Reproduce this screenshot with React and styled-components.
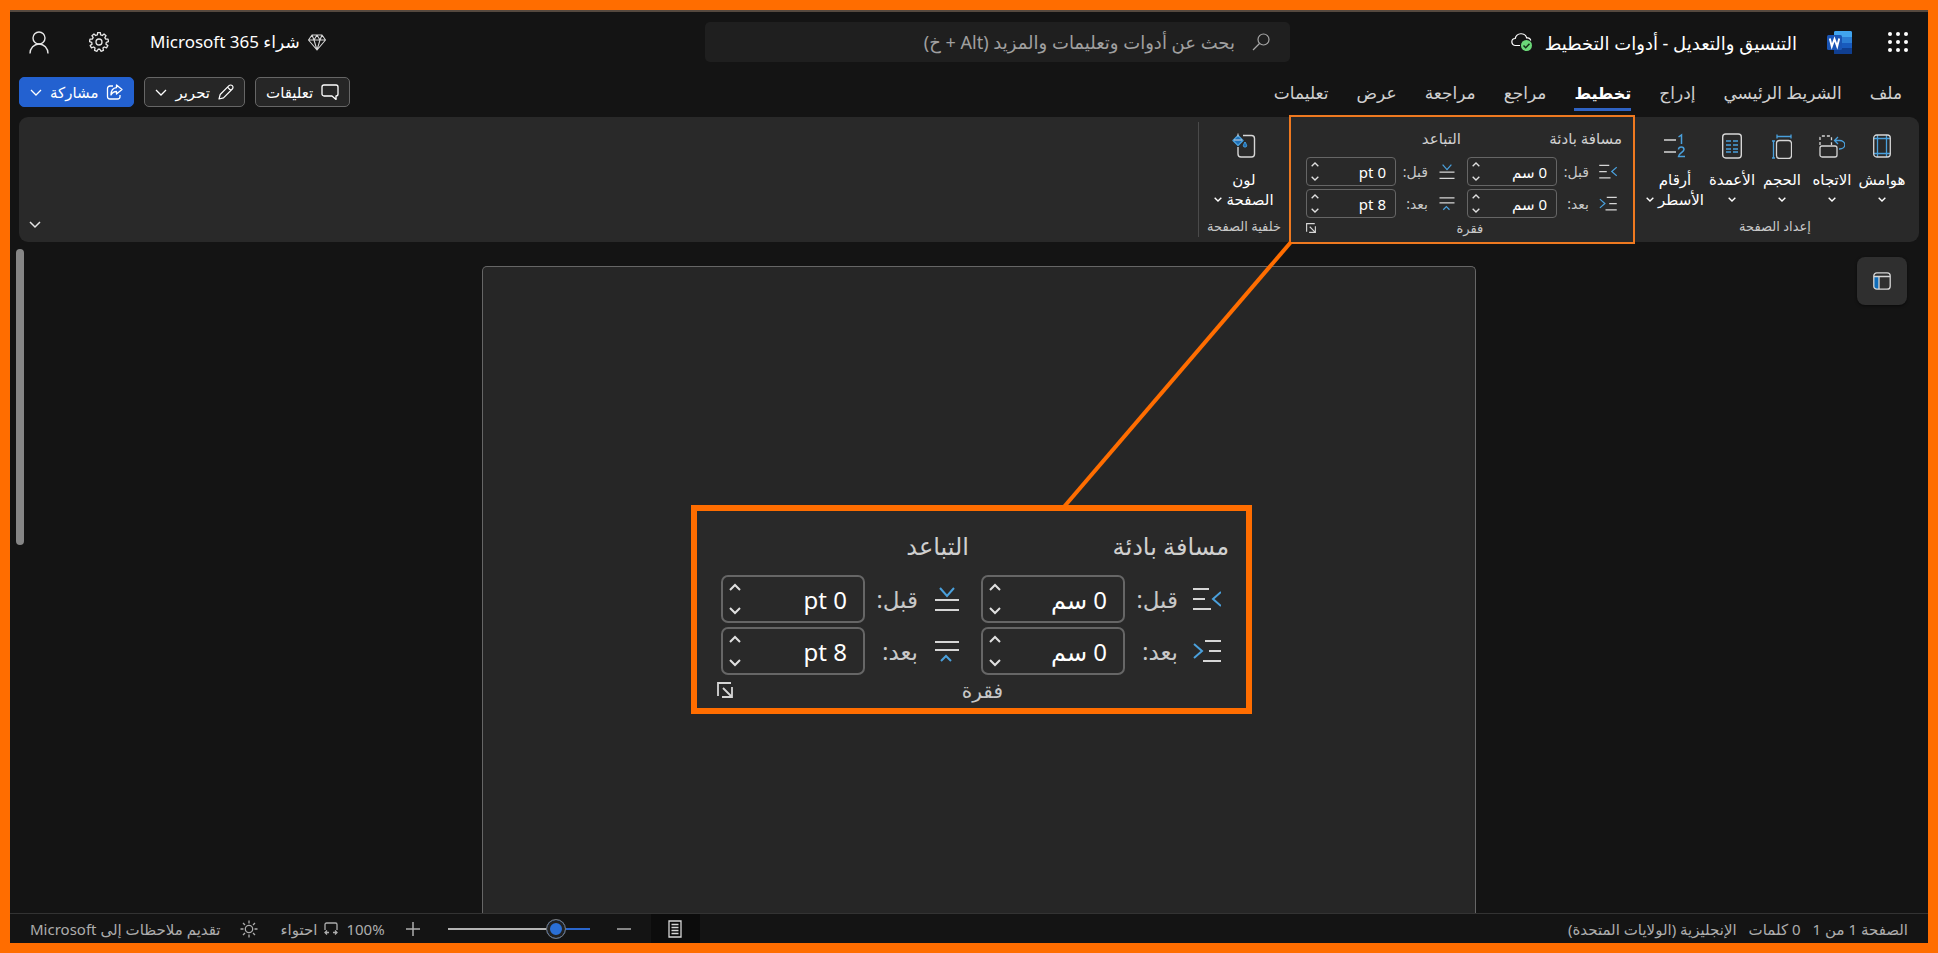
import React from "react";
import styled, { createGlobalStyle, css } from "styled-components";

const blue = "#4aa0dc";
const line = "#d6d6d6";
const orange = "#ff6d00";

const Global = createGlobalStyle`
  *, *::before, *::after { box-sizing: border-box; }
  body { margin: 0; background: #141414; }
  body, button, input { font-family: "Noto Sans", "DejaVu Sans", sans-serif; }
  button { cursor: pointer; }
`;

/* ---------- shell ---------- */

const Frame = styled.div`
  display: flex;
  flex-direction: column;
  min-height: 100vh;
  border: 10px solid ${orange};
  background: #141414;
  color: #fff;
  overflow: hidden;
`;

const Header = styled.header`
  display: grid;
  grid-template-columns: 638fr 585fr 695fr;
  align-items: center;
  height: 62px;
  border-top: 2px solid #55493f;
`;

const HeaderStart = styled.div`
  display: flex;
  align-items: center;
  padding-inline-start: 20px;
`;

const HeaderEnd = styled.div`
  display: flex;
  align-items: center;
  justify-content: flex-end;
  padding-inline-end: 19px;
`;

const IconButton = styled.button`
  display: flex;
  padding: 0;
  border: 0;
  background: none;
  color: #e6e6e6;
  margin-inline-start: ${(p) => p.$gap || 0}px;
`;

const LogoLink = styled.a`
  display: flex;
  margin-inline-start: 36px;
`;

const DocTitle = styled.h1`
  margin: 0;
  margin-inline: 30px 12px;
  padding-top: 2px;
  font-size: 18px;
  line-height: 24px;
  font-weight: 400;
  white-space: nowrap;
`;

const BuyButton = styled.button`
  display: flex;
  align-items: center;
  gap: 8px;
  padding: 0;
  border: 0;
  background: none;
  color: #fff;
  font-size: 17px;
  line-height: 24px;
  white-space: nowrap;
`;

const Search = styled.label`
  display: flex;
  align-items: center;
  gap: 17px;
  height: 40px;
  padding-inline: 20px;
  border-radius: 5px;
  background: #1f1f1f;
  color: #a6a6a6;
`;

const SearchInput = styled.input`
  flex: 1;
  min-width: 0;
  padding: 0;
  border: 0;
  outline: 0;
  background: none;
  color: #fff;
  font-size: 18px;
  &::placeholder { color: #a0a0a0; opacity: 1; }
`;

/* ---------- tabs ---------- */

const TabBar = styled.div`
  display: flex;
  justify-content: space-between;
  height: 45px;
  padding-inline: 26px 9px;
`;

const Tabs = styled.nav`
  display: flex;
  align-items: center;
  gap: 28px;
`;

const Tab = styled.button`
  height: 32px;
  padding: 0;
  border: 0;
  border-bottom: 3px solid transparent;
  background: none;
  color: #d0d0d0;
  font-size: 17px;
  line-height: 24px;
  white-space: nowrap;
  ${(p) => p.$active && css`
    border-color: #2f63c4;
    color: #fff;
    font-size: 16px;
    font-weight: 700;
  `}
`;

const Actions = styled.div`
  display: flex;
  gap: 10px;
  padding-top: 5px;
`;

const Action = styled.button`
  display: flex;
  align-items: center;
  justify-content: center;
  gap: 8px;
  height: 30px;
  padding: 0 10px;
  border: 1px solid ${(p) => (p.$primary ? "#2361d0" : "#666")};
  border-radius: 5px;
  background: ${(p) => (p.$primary ? "#2361d0" : "#262626")};
  color: #fff;
  font-size: 15px;
  line-height: 20px;
  white-space: nowrap;
`;

/* ---------- ribbon ---------- */

const Ribbon = styled.section`
  display: flex;
  height: 125px;
  margin-inline: 9px;
  border-radius: 9px;
  background: #292929;
`;

const Group = styled.div`
  display: flex;
  flex-direction: column;
  padding-inline: ${(p) => p.$pad || "0"};
`;

const Tools = styled.div`
  display: flex;
  justify-content: center;
  flex: 1;
  padding-top: 14px;
`;

const Tool = styled.button`
  display: flex;
  flex-direction: column;
  align-items: center;
  width: ${(p) => p.$width || 50}px;
  padding: 0;
  border: 0;
  background: none;
  color: #fff;
  font-size: 15px;
  line-height: 20px;
  white-space: nowrap;
`;

const ToolIcon = styled.span`
  display: flex;
  align-items: center;
  height: 30px;
  margin-bottom: 8px;
`;

const ToolLine = styled.span`
  display: flex;
  align-items: center;
  justify-content: center;
  gap: 4px;
  height: 20px;
`;

const GroupName = styled.div`
  height: 25px;
  color: #c8c8c8;
  font-size: 13px;
  line-height: 18px;
  text-align: center;
  white-space: nowrap;
`;

const RibbonRest = styled.div`
  display: flex;
  flex: 1;
  align-items: flex-end;
  justify-content: flex-end;
  margin-block: 5px;
  padding: 0 10px 7px;
  border-inline-start: 1px solid #4a4a4a;
`;

/* ---------- paragraph settings (ribbon size and enlarged size) ---------- */

const small = {
  pad: "11px 11px 0 15px", gap: 6, head: 20, headGap: 6, font: 15, row: 29, rowGap: 3,
  icon: 18, inset: 5, iconGap: 10, label: 32, labelFont: 14, field: 90, radius: 4, textPad: 10,
  foot: 20, border: 1, footFont: 13, launch: 10, spin: 16,
};
const large = {
  pad: "19px 17px 0 20px", gap: 8, head: 32, headGap: 9, font: 24, row: 48, rowGap: 4,
  icon: 28, inset: 8, iconGap: 15, label: 53, labelFont: 23, field: 144, radius: 7, textPad: 18,
  foot: 30, border: 2, footFont: 20, launch: 16, spin: 24,
};

const Settings = styled.section`
  display: flex;
  flex-direction: column;
  flex: 1;
  padding: ${(p) => p.$s.pad};
  font-size: ${(p) => p.$s.font}px;
`;

const Columns = styled.div`
  display: flex;
  gap: ${(p) => p.$s.gap}px;
`;

const Column = styled.div`
  flex: 1;
  display: flex;
  flex-direction: column;
  gap: ${(p) => p.$s.rowGap}px;
`;

const ColumnTitle = styled.div`
  height: ${(p) => p.$s.head}px;
  margin-bottom: ${(p) => p.$s.headGap}px;
  line-height: ${(p) => p.$s.head}px;
  color: #d0d0d0;
  white-space: nowrap;
`;

const Row = styled.div`
  display: flex;
  align-items: center;
  height: ${(p) => p.$s.row}px;
  padding-inline-start: ${(p) => p.$s.inset}px;
`;

const RowLabel = styled.label`
  width: ${(p) => p.$s.label}px;
  margin-inline-start: ${(p) => p.$s.iconGap}px;
  color: #c8c8c8;
  font-size: ${(p) => p.$s.labelFont}px;
  white-space: nowrap;
`;

const Field = styled.div`
  display: flex;
  width: ${(p) => p.$s.field}px;
  height: 100%;
  border: ${(p) => p.$s.border}px solid #666;
  border-radius: ${(p) => p.$s.radius}px;
`;

const Value = styled.input`
  flex: 1;
  min-width: 0;
  padding: 0;
  padding-inline-start: ${(p) => p.$s.textPad - p.$s.border}px;
  border: 0;
  outline: 0;
  background: none;
  color: #fff;
  font-size: ${(p) => p.$s.font}px;
`;

const Spinner = styled.div`
  display: flex;
  flex-direction: column;
  width: ${(p) => p.$s.spin}px;
`;

const Spin = styled.button`
  display: flex;
  flex: 1;
  align-items: center;
  justify-content: center;
  padding: 0;
  border: 0;
  background: none;
  color: #e0e0e0;
`;

const Footer = styled.div`
  display: grid;
  grid-template-columns: 12fr auto 13fr;
  align-items: center;
  height: ${(p) => p.$s.foot}px;
  color: #c8c8c8;
  font-size: ${(p) => p.$s.footFont}px;
`;

const Launcher = styled.button`
  display: flex;
  justify-self: end;
  padding: 0;
  border: 0;
  background: none;
`;

const Highlight = styled.div`
  display: flex;
  width: 346px;
  margin-block: -2px;
  border: 2px solid #ee7920;
  background: #292929;
`;

/* ---------- document area ---------- */

const Workspace = styled.main`
  position: relative;
  display: flex;
  flex: 1;
  justify-content: center;
  padding: 24px 0 0 20px;
`;

const Sheet = styled.div`
  position: relative;
  width: 994px;
  max-width: 100%;
  border: 1px solid #666;
  border-bottom: 0;
  border-radius: 5px 5px 0 0;
  background: #262626;
`;

const Callout = styled.div`
  position: absolute;
  top: 238px;
  left: 208px;
  display: flex;
  width: 561px;
  height: 209px;
  border: 6px solid ${orange};
  background: #292929;
`;

const Connector = styled.svg`
  position: absolute;
  left: 364px;
  bottom: 200px;
`;

const ScrollThumb = styled.div`
  position: absolute;
  top: 7px;
  left: 6px;
  width: 8px;
  height: 296px;
  border-radius: 4px;
  background: #868686;
`;

const PaneButton = styled.button`
  position: absolute;
  top: 15px;
  right: 21px;
  display: flex;
  align-items: center;
  justify-content: center;
  width: 50px;
  height: 48px;
  padding: 0;
  border: 0;
  border-radius: 8px;
  background: #2f2f2f;
  box-shadow: 0 1px 3px #0008;
`;

/* ---------- status bar ---------- */

const StatusBar = styled.footer`
  display: flex;
  align-items: center;
  justify-content: space-between;
  height: 30px;
  padding-inline: 20px;
  border-top: 1px solid #333;
  color: #adadad;
  font-size: 15px;
  line-height: 20px;
  white-space: nowrap;
`;

const StatusGroup = styled.div`
  display: flex;
  align-items: center;
  gap: ${(p) => p.$gap || 0}px;
  height: 100%;
`;

const StatusButton = styled.button`
  display: flex;
  align-items: center;
  gap: 7px;
  padding: 0;
  border: 0;
  background: none;
  color: inherit;
  font-size: 15px;
  line-height: 20px;
  margin-inline-start: ${(p) => p.$gap || 0}px;
`;

const ViewButton = styled.button`
  display: flex;
  align-items: center;
  justify-content: center;
  width: 49px;
  height: 100%;
  padding: 0;
  border: 0;
  background: #0c0c0c;
`;

const ZoomSlider = styled.input`
  appearance: none;
  width: 142px;
  height: 20px;
  margin: 0;
  margin-inline-start: 27px;
  background: linear-gradient(to left, #2a66cc 23%, #b4b4b4 23%) center / 100% 2px no-repeat;
  &::-webkit-slider-thumb {
    appearance: none;
    width: 20px;
    height: 20px;
    border: 1px solid #777;
    border-radius: 50%;
    background: #2a6fd6;
    box-shadow: inset 0 0 0 3px #222;
  }
`;

/* ---------- drawings ---------- */

const Svg = ({ w, h = w, vb, children, ...rest }) => (
  <svg width={w} height={h} viewBox={vb || `0 0 ${w} ${h}`} fill="none" stroke="currentColor" aria-hidden="true" {...rest}>
    {children}
  </svg>
);

const Chevron = ({ w = 12, up, sw = 1.5 }) => (
  <Svg w={w} h={w} vb="0 0 12 12" strokeWidth={sw}>
    <path d={up ? "M1 8l5-5 5 5" : "M1 4l5 5 5-5"} />
  </Svg>
);

const Waffle = () => (
  <Svg w={20} fill="#fff" stroke="none">
    {[2, 10, 18].map((y) => [2, 10, 18].map((x) => <circle key={x + "-" + y} cx={x} cy={y} r="2" />))}
  </Svg>
);

const WordLogo = () => (
  <svg width="25" height="23" viewBox="0 0 25 23" aria-hidden="true">
    <rect x="7" width="18" height="23" rx="1.5" fill="#185abd" />
    <path d="M8.5 0h15A1.5 1.5 0 0 1 25 1.5V6H7V1.5A1.5 1.5 0 0 1 8.5 0z" fill="#41a5ee" />
    <path d="M7 6h18v6H7z" fill="#2b7cd3" />
    <path d="M7 17h18v4.5a1.5 1.5 0 0 1-1.5 1.5h-15A1.5 1.5 0 0 1 7 21.500z" fill="#103f91" />
    <rect y="4" width="15" height="15" rx="1.5" fill="#1a55b5" />
    <path d="M2.800 7.500l2 8 2.700-7.500 2.700 7.500 2-8" fill="none" stroke="#fff" strokeWidth="1.900" />
  </svg>
);

const CloudSaved = () => (
  <Svg w={22} h={20} strokeWidth="1.200">
    <path d="M9 13.500H4.500a3.500 3.500 0 0 1-.3-7A6 6 0 0 1 15.800 6a3.600 3.600 0 0 1 4 2.500" />
    <circle cx="15.500" cy="13.500" r="5.500" fill="#6bd878" stroke="none" />
    <path d="M12.500 13.500l2.200 2.200 3.800-4" stroke="#153018" strokeWidth="1.500" />
  </Svg>
);

const SearchIcon = () => (
  <Svg w={18} strokeWidth="1.200">
    <circle cx="11.500" cy="6.500" r="5.500" />
    <path d="M7.500 10.500L1 17" />
  </Svg>
);

const Diamond = () => (
  <Svg w={18} h={17} strokeWidth="1.100" stroke={line} strokeLinejoin="round">
    <path d="M4 1h10l3.500 5L9 16 .5 6zM.5 6h17M4 1l2 5 3 10 3-10 2-5M6 6l3-5 3 5" />
  </Svg>
);

const gearPath = (() => {
  const pts = [];
  for (let i = 0; i < 9; i += 1) {
    [[-13, 7.3], [-8, 9.5], [8, 9.5], [13, 7.3]].forEach(([da, r]) => {
      const a = ((i * 40 + da - 90) * Math.PI) / 180;
      pts.push(`${(10 + r * Math.cos(a)).toFixed(2)} ${(10 + r * Math.sin(a)).toFixed(2)}`);
    });
  }
  return `M${pts.join("L")}z`;
})();

const Gear = () => (
  <Svg w={20} strokeWidth="1.300" strokeLinejoin="round">
    <path d={gearPath} />
    <circle cx="10" cy="10" r="3" />
  </Svg>
);

const Person = () => (
  <Svg w={20} h={23} strokeWidth="1.400">
    <circle cx="10" cy="7" r="6" />
    <path d="M1 22.500a9 9.500 0 0 1 18 0" />
  </Svg>
);

const Comment = () => (
  <Svg w={18} h={16} strokeWidth="1.300" strokeLinejoin="round">
    <path d="M3 1h12a2 2 0 0 1 2 2v7a2 2 0 0 1-2 2v3.500L11 12H3a2 2 0 0 1-2-2V3a2 2 0 0 1 2-2z" />
  </Svg>
);

const Pencil = () => (
  <Svg w={16} strokeWidth="1.200" strokeLinejoin="round">
    <path d="M1 15l1.200-4.500L11 1.700a2.300 2.300 0 0 1 3.300 3.300L5.500 13.800zM9.500 3.200l3.300 3.300" />
  </Svg>
);

const Share = () => (
  <Svg w={17} h={16} strokeWidth="1.300" strokeLinejoin="round">
    <path d="M7 2H4a2.500 2.500 0 0 0-2.500 2.500v8A2.500 2.500 0 0 0 4 15h7.500a2.500 2.500 0 0 0 2.500-2.500V11" />
    <path d="M10.500 1l5.500 4.500-5.500 4.500V7.500C7.500 7.500 6 9 5 11c0-4 2-7 5.500-7.300z" />
  </Svg>
);

const Margins = () => (
  <Svg w={18} h={24} strokeWidth="1.300">
    <path d="M4.500 1v22M13.500 1v22M1 4.500h16M1 19.500h16" stroke={blue} />
    <rect x=".7" y="1" width="16.600" height="22" rx="3" stroke={line} />
  </Svg>
);

const Orientation = () => (
  <Svg w={26} h={24} strokeWidth="1.300">
    <path d="M1 11V3.500A1.500 1.500 0 0 1 2.500 2H11a1.500 1.500 0 0 1 1.500 1.500V11" stroke={line} strokeDasharray="3 2" />
    <rect x="1" y="12" width="17" height="11" rx="2" stroke={line} />
    <path d="M19 3l-3.500 3.500L19 10M16 6.500h4.500a5 4 0 0 1 0 8.500H20" stroke={blue} />
  </Svg>
);

const Size = () => (
  <Svg w={20} h={25} strokeWidth="1.300">
    <rect x="4.500" y="6.500" width="15" height="18" rx="3" stroke={line} />
    <path d="M5 2.500h14M5 .5v4M19 .5v4M1.500 7v17M0 7h3M0 24h3" stroke={blue} />
  </Svg>
);

const ColumnsIcon = () => (
  <Svg w={20} h={26} strokeWidth="1.400">
    <rect x=".7" y="1" width="18.600" height="24" rx="3" stroke={line} />
    <path d="M4 8h5M4 12h5M4 16h5M4 19h5M11 8h5M11 12h5M11 16h5M11 19h5" stroke={blue} />
  </Svg>
);

const LineNumbers = () => (
  <Svg w={24} h={26} strokeWidth="1.500">
    <path d="M1 7h12M1 19h12" stroke={line} />
    <path d="M15.500 4l3-2v9M15.500 16.500c0-3.500 5.500-3.300 5.500 0 0 2.500-5.500 4-5.500 7H22" stroke={blue} />
  </Svg>
);

const PageColor = () => (
  <Svg w={24} h={26} strokeWidth="1.400">
    <path d="M11 2.500h8.500a3 3 0 0 1 3 3V21a3 3 0 0 1-3 3H9a3 3 0 0 1-3-3v-7" stroke={line} />
    <path d="M1 7.500L6 2.500l5 5-5 5z" fill="#1d6fb8" stroke={blue} strokeLinejoin="round" />
    <path d="M6 .5v3M2 7h8" stroke={line} strokeWidth="1" />
    <path d="M13 9c2.500 4 2 5 0 5s-2.500-1 0-5z" fill="#1d6fb8" stroke={blue} strokeWidth="1" />
  </Svg>
);

const rowIcons = {
  indentBefore: <><path d="M0 2h16M0 12h12M0 22h18" stroke={line} /><path d="M28 5l-8 7 8 7" stroke={blue} /></>,
  indentAfter: <><path d="M12 2h16M16 12h12M10 22h18" stroke={line} /><path d="M1 5l8 7-8 7" stroke={blue} /></>,
  spaceBefore: <><path d="M2 13h24M2 23h24" stroke={line} /><path d="M7 1l7 8 7-8" stroke={blue} /></>,
  spaceAfter: <><path d="M2 3h24M2 11h24" stroke={line} /><path d="M8 22l5-5 5 5" stroke={blue} /></>,
};

const RowIcon = ({ name, w }) => (
  <Svg w={w} h={Math.round((w * 24) / 28)} vb="0 0 28 24" strokeWidth="2">{rowIcons[name]}</Svg>
);

const LaunchIcon = ({ w }) => (
  <Svg w={w} vb="0 0 16 16" strokeWidth="1.800" stroke={line}>
    <path d="M1 14V1h13M15 5v10H5M6 6l8.500 8.500" />
  </Svg>
);

const Pane = () => (
  <Svg w={18} strokeWidth="1.300" stroke={line}>
    <path d="M1 4.500h5V17H3a2 2 0 0 1-2-2z" fill="#0f6cb8" stroke="none" />
    <rect x=".8" y=".8" width="16.400" height="16.400" rx="3" />
    <path d="M1 4.500h16M6 4.500V17" />
  </Svg>
);

const DocView = () => (
  <Svg w={14} h={18} strokeWidth="1.300" stroke={line}>
    <path d="M1 1h12v16H1zM3.500 4.500h7M3.500 7.500h7M3.500 10.500h7M3.500 13.500h7" />
  </Svg>
);

const FitIcon = () => (
  <Svg w={14} h={13} strokeWidth="1.300">
    <path d="M1 8V2.500A1.500 1.500 0 0 1 2.500 1h9A1.500 1.500 0 0 1 13 2.500V8M1 10.500h4M3 8.500l-2 2 2 2M13 10.500H9M11 8.500l2 2-2 2" />
  </Svg>
);

const Sun = () => (
  <Svg w={18} strokeWidth="1.300">
    <circle cx="9" cy="9" r="3.700" />
    <path d="M9 .5v3M9 14.500v3M.5 9h3M14.500 9h3M3 3l2 2M13 13l2 2M15 3l-2 2M5 13l-2 2" />
  </Svg>
);

/* ---------- composed parts ---------- */

const settings = [
  { title: "مسافة بادئة", rows: [["indentBefore", "قبل:", "0 سم"], ["indentAfter", "بعد:", "0 سم"]] },
  { title: "التباعد", rows: [["spaceBefore", "قبل:", "0 pt"], ["spaceAfter", "بعد:", "8 pt"]] },
];

function ParagraphSettings({ s, id }) {
  const chevron = s === large ? 12 : 8;
  return (
    <Settings $s={s}>
      <Columns $s={s}>
        {settings.map((col) => (
          <Column $s={s} key={col.title}>
            <ColumnTitle $s={s}>{col.title}</ColumnTitle>
            {col.rows.map(([icon, label, value]) => (
              <Row $s={s} key={icon}>
                <RowIcon name={icon} w={s.icon} />
                <RowLabel $s={s} htmlFor={`${id}-${icon}`}>{label}</RowLabel>
                <Field $s={s}>
                  <Value $s={s} id={`${id}-${icon}`} defaultValue={value} />
                  <Spinner $s={s}>
                    <Spin aria-label="زيادة"><Chevron w={chevron} up sw={2} /></Spin>
                    <Spin aria-label="إنقاص"><Chevron w={chevron} sw={2} /></Spin>
                  </Spinner>
                </Field>
              </Row>
            ))}
          </Column>
        ))}
      </Columns>
      <Footer $s={s}>
        <span />
        <span>فقرة</span>
        <Launcher aria-label="إعدادات الفقرة"><LaunchIcon w={s.launch} /></Launcher>
      </Footer>
    </Settings>
  );
}

const tabs = ["ملف", "الشريط الرئيسي", "إدراج", "تخطيط", "مراجع", "مراجعة", "عرض", "تعليمات"];

const pageTools = [
  ["هوامش", Margins],
  ["الاتجاه", Orientation],
  ["الحجم", Size],
  ["الأعمدة", ColumnsIcon],
];

export default function App() {
  return (
    <Frame dir="rtl" lang="ar">
      <Global />
      <Header>
        <HeaderStart>
          <IconButton aria-label="مشغل التطبيقات"><Waffle /></IconButton>
          <LogoLink href="#word" aria-label="Word"><WordLogo /></LogoLink>
          <DocTitle>التنسيق والتعديل - أدوات التخطيط</DocTitle>
          <CloudSaved />
        </HeaderStart>
        <Search>
          <SearchIcon />
          <SearchInput placeholder="بحث عن أدوات وتعليمات والمزيد (Alt + خ)" />
        </Search>
        <HeaderEnd>
          <BuyButton><Diamond />شراء Microsoft 365</BuyButton>
          <IconButton $gap={41} aria-label="الإعدادات"><Gear /></IconButton>
          <IconButton $gap={40} aria-label="الحساب"><Person /></IconButton>
        </HeaderEnd>
      </Header>

      <TabBar>
        <Tabs>
          {tabs.map((t) => <Tab key={t} $active={t === "تخطيط"}>{t}</Tab>)}
        </Tabs>
        <Actions>
          <Action><Comment />تعليقات</Action>
          <Action><Pencil />تحرير<Chevron sw={1.3} /></Action>
          <Action $primary><Share />مشاركة<Chevron sw={1.3} /></Action>
        </Actions>
      </TabBar>

      <Ribbon>
        <Group $pad="12px 8px">
          <Tools>
            {pageTools.map(([name, Icon]) => (
              <Tool key={name}>
                <ToolIcon><Icon /></ToolIcon>
                <ToolLine>{name}</ToolLine>
                <ToolLine><Chevron w={8} sw={2} /></ToolLine>
              </Tool>
            ))}
            <Tool $width={64}>
              <ToolIcon><LineNumbers /></ToolIcon>
              <ToolLine>أرقام</ToolLine>
              <ToolLine>الأسطر<Chevron w={8} sw={2} /></ToolLine>
            </Tool>
          </Tools>
          <GroupName>إعداد الصفحة</GroupName>
        </Group>
        <Highlight><ParagraphSettings s={small} id="ribbon" /></Highlight>
        <Group $pad="8px 8px">
          <Tools>
            <Tool $width={70}>
              <ToolIcon><PageColor /></ToolIcon>
              <ToolLine>لون</ToolLine>
              <ToolLine>الصفحة<Chevron w={8} sw={2} /></ToolLine>
            </Tool>
          </Tools>
          <GroupName>خلفية الصفحة</GroupName>
        </Group>
        <RibbonRest>
          <IconButton aria-label="طي الشريط"><Chevron /></IconButton>
        </RibbonRest>
      </Ribbon>

      <Workspace>
        <Sheet>
          <Callout>
            <Connector width="240" height="268" viewBox="0 0 240 268" aria-hidden="true">
              <path d="M230 2L2 268" stroke={orange} strokeWidth="4" />
            </Connector>
            <ParagraphSettings s={large} id="zoomed" />
          </Callout>
        </Sheet>
        <ScrollThumb />
        <PaneButton aria-label="جزء التنقل"><Pane /></PaneButton>
      </Workspace>

      <StatusBar>
        <StatusGroup $gap={12}>
          <span>الصفحة 1 من 1</span>
          <span>0 كلمات</span>
          <span>الإنجليزية (الولايات المتحدة)</span>
        </StatusGroup>
        <StatusGroup>
          <ViewButton aria-label="تخطيط الطباعة"><DocView /></ViewButton>
          <StatusButton $gap={20} aria-label="تصغير"><Svg w={14} strokeWidth="1.500"><path d="M0 7h14" /></Svg></StatusButton>
          <ZoomSlider type="range" min="0" max="100" defaultValue="19" aria-label="التكبير" />
          <StatusButton $gap={28} aria-label="تكبير"><Svg w={14} strokeWidth="1.500"><path d="M0 7h14M7 0v14" /></Svg></StatusButton>
          <StatusButton $gap={21}>100%</StatusButton>
          <StatusButton $gap={8}><FitIcon />احتواء</StatusButton>
          <StatusButton $gap={22} aria-label="الوضع الداكن"><Sun /></StatusButton>
          <StatusButton $gap={20}>تقديم ملاحظات إلى Microsoft</StatusButton>
        </StatusGroup>
      </StatusBar>
    </Frame>
  );
}
